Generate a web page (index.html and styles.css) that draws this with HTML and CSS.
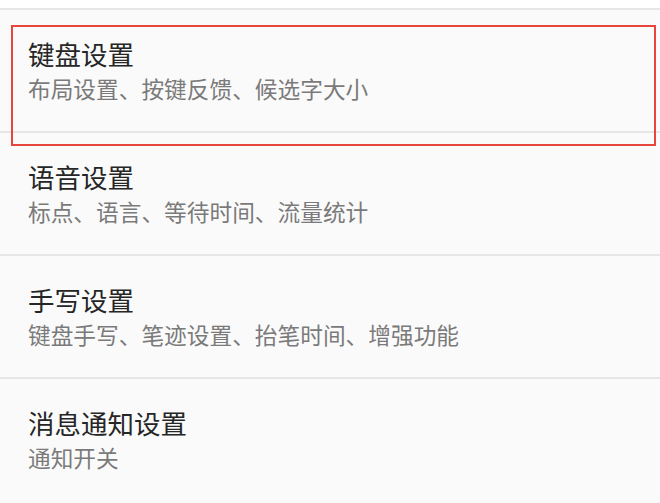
FILE: index.html
```html
<!DOCTYPE html>
<html lang="zh-CN">
<head>
<meta charset="utf-8">
<title>设置</title>
<link rel="stylesheet" href="styles.css">
</head>
<body>
<div class="page">
  <div class="top-strip"></div>
  <ul class="settings">
    <li class="item">
      <div class="title">键盘设置</div>
      <div class="desc">布局设置、按键反馈、候选字大小</div>
    </li>
    <li class="item">
      <div class="title">语音设置</div>
      <div class="desc">标点、语言、等待时间、流量统计</div>
    </li>
    <li class="item">
      <div class="title">手写设置</div>
      <div class="desc">键盘手写、笔迹设置、抬笔时间、增强功能</div>
    </li>
    <li class="item">
      <div class="title">消息通知设置</div>
      <div class="desc">通知开关</div>
    </li>
  </ul>
  <div class="highlight"></div>
</div>
</body>
</html>
```
FILE: styles.css
```css
html, body {
  margin: 0;
  padding: 0;
  background: #fafafa;
}
.page {
  position: relative;
  width: 660px;
  height: 503px;
  overflow: hidden;
  font-family: "Noto Sans CJK SC", "Noto Sans", sans-serif;
  background: #fafafa;
}
.top-strip {
  height: 8px;
  background: #ffffff;
}
.settings {
  list-style: none;
  margin: 0;
  padding: 0;
}
.item {
  box-sizing: border-box;
  height: 123px;
  border-top: 2px solid #e6e6e6;
  padding: 27px 0 0 28px;
}
.title {
  font-size: 26.5px;
  line-height: 34px;
  color: #262626;
}
.desc {
  margin-top: 3px;
  font-size: 22.7px;
  line-height: 30px;
  color: #7a7a7a;
}
.highlight {
  position: absolute;
  left: 11px;
  top: 25px;
  width: 645px;
  height: 121px;
  box-sizing: border-box;
  border: 2px solid #e8453c;
}
```
